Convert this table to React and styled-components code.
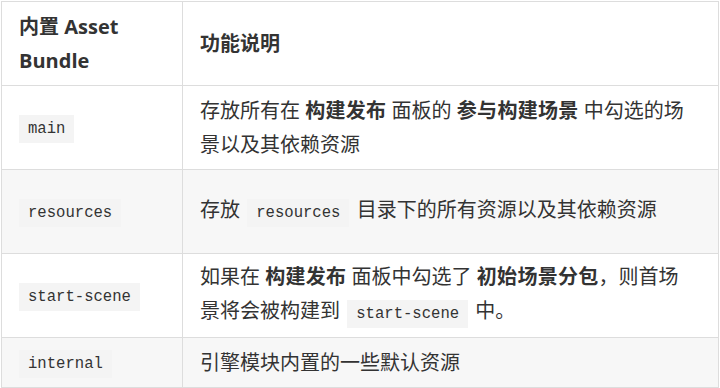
import React from 'react';
import styled, { createGlobalStyle } from 'styled-components';

const GlobalStyle = createGlobalStyle`
  html, body {
    margin: 0;
    padding: 0;
    background: #fff;
  }
`;

const Page = styled.div`
  padding: 1px 0 0 1px;
  width: 718px;
`;

const Table = styled.table`
  border-collapse: collapse;
  width: 718px;
  table-layout: fixed;
  font-family: 'Open Sans', 'Noto Sans CJK SC', sans-serif;
  font-size: 20px;
  line-height: 34px;
  color: #333;
`;

const Row = styled.tr`
  height: ${p => p.h}px;
  background: ${p => (p.striped ? '#f7f7f7' : '#fff')};
`;

const Head = styled.th`
  border: 1px solid #dddddd;
  padding: 0 17px;
  text-align: left;
  vertical-align: middle;
  font-weight: 700;
  width: ${p => p.w || 'auto'};
`;

const Cell = styled.td`
  border: 1px solid #dddddd;
  padding: 0 30px 0 17px;
  vertical-align: middle;
`;

const Code = styled.code`
  font-family: 'Liberation Mono', 'DejaVu Sans Mono', monospace;
  font-size: 15.6px;
  background: #f4f4f4;
  padding: 5px 9px;
  margin: 0 2px;
  color: #333;
`;

const LeftCode = styled(Code)`
  margin: 0;
`;

const Strong = styled.strong`
  font-weight: 700;
  letter-spacing: 0.3px;
`;

const rows = [
  {
    name: 'main',
    h: 84,
    desc: (
      <>
        存放所有在 <Strong>构建发布</Strong> 面板的 <Strong>参与构建场景</Strong> 中勾选的场景以及其依赖资源
      </>
    ),
  },
  {
    name: 'resources',
    h: 84,
    striped: true,
    desc: (
      <>
        存放 <Code>resources</Code> 目录下的所有资源以及其依赖资源
      </>
    ),
  },
  {
    name: 'start-scene',
    h: 84,
    desc: (
      <>
        如果在 <Strong>构建发布</Strong> 面板中勾选了 <Strong>初始场景分包</Strong>，则首场景将会被构建到 <Code>start-scene</Code> 中。
      </>
    ),
  },
  {
    name: 'internal',
    h: 50,
    striped: true,
    desc: <>引擎模块内置的一些默认资源</>,
  },
];

const App = () => (
  <Page>
    <GlobalStyle />
    <Table>
      <thead>
        <Row h={84}>
          <Head w="146px">内置 Asset Bundle</Head>
          <Head>功能说明</Head>
        </Row>
      </thead>
      <tbody>
        {rows.map(r => (
          <Row key={r.name} h={r.h} striped={r.striped}>
            <Cell>
              <LeftCode>{r.name}</LeftCode>
            </Cell>
            <Cell>{r.desc}</Cell>
          </Row>
        ))}
      </tbody>
    </Table>
  </Page>
);

export default App;
